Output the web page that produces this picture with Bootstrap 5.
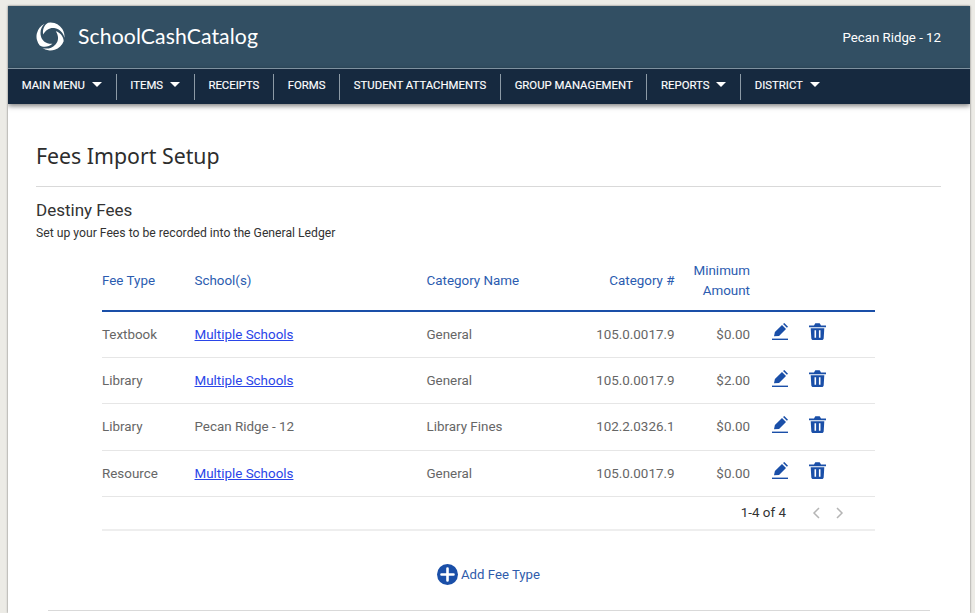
<!DOCTYPE html>
<html lang="en">
<head>
<meta charset="utf-8">
<title>Fees Import Setup</title>
<link href="https://cdn.jsdelivr.net/npm/bootstrap@5.3.0/dist/css/bootstrap.min.css" rel="stylesheet">
<style>
html,body{height:613px;overflow:hidden}
body{background:#ecebe6;font-family:Roboto,"Liberation Sans",sans-serif;color:#333;padding:6px 5px 0 8px}
.sheet{background:#fff;height:607px;overflow:hidden;box-shadow:0 0 2px rgba(0,0,0,.55)}
.brandbar{background:#324f63;height:62px;padding:0 29px 0 28px}
.brandname{font-family:Lato,"Noto Sans",sans-serif;font-size:21.2px;color:#fff;letter-spacing:.1px;margin-left:13px}
.sitename{font-size:13.25px;font-weight:400;color:#fff;padding-top:1px}
.menubar{background:#16293f;height:36px;border-top:1px solid #7e919f;box-shadow:0 2px 5px rgba(0,0,0,.5);flex-wrap:nowrap;position:relative}
.menubar .nav-link{color:#fff;font-size:11.35px;font-weight:400;padding:0 13.7px;height:26px;line-height:23px;white-space:nowrap;border-right:1px solid #8c9aa6;-webkit-text-stroke:.15px #fff}
.menubar .nav-item:last-child .nav-link{border-right:0}
.menubar .dropdown-toggle::after{margin-left:7px;vertical-align:2px;border-top-width:5px;border-left-width:5px;border-right-width:5px}
.pagebody{padding:0 29px 0 28px}
.pagetitle{font-family:"Noto Sans",sans-serif;font-size:21.3px;font-weight:400;color:#2d2d2d;margin:0;padding-top:37px;padding-bottom:15px;line-height:30px;border-bottom:1px solid #d9d9d9}
.subtitle{font-size:17px;font-weight:400;color:#333;margin:12px 0 0;line-height:22px}
.subnote{font-size:12.2px;color:#333;margin:4px 0 0;line-height:16px}
.feegrid{width:773px;margin:10px 0 0 66px;table-layout:fixed;font-size:13.4px}
.feegrid>:not(caption)>*>*{padding:0;vertical-align:middle;color:#666;border-bottom:1px solid #e6e6e6;box-shadow:none}
.feegrid thead th{color:#2b5cb0;font-weight:400;height:60px;line-height:20px;border-bottom:2px solid #1a4fa8}
.feegrid tbody td{height:46.4px;padding-top:1px}
.feegrid a{color:#2a45e8}
.toolcell svg{display:block}
.toolwrap{gap:21px;padding-left:22px;padding-bottom:6px}
.pagerrow td{height:33px!important;color:#333!important;border-bottom:2px solid #eee!important}
.pagerwrap{gap:26px;padding-right:31px}
.addrow{margin-top:33px;gap:3px;color:#2f5cab;font-size:13.2px}
.addrow span{padding-top:1px}
.footline{border-top:1px solid #d9d9d9;margin:25px 11px 0 12px}
</style>
</head>
<body>
<div class="sheet">
  <header class="brandbar d-flex align-items-center justify-content-between">
    <div class="d-flex align-items-center">
      <svg width="29" height="29" viewBox="0 0 29 29" fill="#fff" aria-hidden="true">
        <defs><path id="swoop" d="M12.070 .71A14 14 0 0 1 28.450 15.720C27.500 11 24 7.500 19.250 6.270 15 5 10 7 7.260 12.560 6 8 8.500 2.500 12.070 .71z"/></defs>
        <use href="#swoop"/>
        <use href="#swoop" transform="rotate(120 14.5 14.5)"/>
        <use href="#swoop" transform="rotate(240 14.5 14.5)"/>
      </svg>
      <span class="brandname">SchoolCashCatalog</span>
    </div>
    <span class="sitename">Pecan Ridge - 12</span>
  </header>
  <nav class="menubar nav align-items-center">
    <div class="nav-item"><a class="nav-link dropdown-toggle" href="#">MAIN MENU</a></div>
    <div class="nav-item"><a class="nav-link dropdown-toggle" href="#">ITEMS</a></div>
    <div class="nav-item"><a class="nav-link" href="#">RECEIPTS</a></div>
    <div class="nav-item"><a class="nav-link" href="#">FORMS</a></div>
    <div class="nav-item"><a class="nav-link" href="#">STUDENT ATTACHMENTS</a></div>
    <div class="nav-item"><a class="nav-link" href="#">GROUP MANAGEMENT</a></div>
    <div class="nav-item"><a class="nav-link dropdown-toggle" href="#">REPORTS</a></div>
    <div class="nav-item"><a class="nav-link dropdown-toggle" href="#">DISTRICT</a></div>
  </nav>
  <main class="pagebody">
    <h1 class="pagetitle">Fees Import Setup</h1>
    <h2 class="subtitle">Destiny Fees</h2>
    <p class="subnote">Set up your Fees to be recorded into the General Ledger</p>
    <svg width="0" height="0" class="position-absolute" aria-hidden="true">
      <defs>
        <g id="pen"><path d="M2 13.200l.9-4.200L10 1.900l4 4-7 7zM11 1L12.300 0l3.700 3.700-1.100 1.100z"/><rect y="15.600" width="16" height="1.400"/></g>
        <path id="bin" fill-rule="evenodd" d="M.4 2.400H5L6 .8c.2-.4.5-.5.9-.5h3.200c.4 0 .7.1.9.5l1 1.600h4.600c.3 0 .4.2.4.4v1.500H0V2.800c0-.2.1-.4.4-.4zM1.700 5.200h13.600l-.6 10c-.1 1-.8 1.800-1.900 1.800H4.200c-1.100 0-1.800-.8-1.900-1.800zM5.500 7.200v7.500h1.600V7.200zm4.400 0v7.500h1.600V7.200z"/>
      </defs>
    </svg>
    <table class="table feegrid mb-0">
      <colgroup><col style="width:92.5px"><col style="width:232px"><col style="width:130px"><col style="width:118px"><col style="width:75.5px"><col></colgroup>
      <thead><tr><th>Fee Type</th><th>School(s)</th><th>Category Name</th><th class="text-end">Category #</th><th class="text-end">Minimum<br>Amount</th><th></th></tr></thead>
      <tbody>
        <tr><td>Textbook</td><td><a href="#">Multiple Schools</a></td><td>General</td><td class="text-end">105.0.0017.9</td><td class="text-end">$0.00</td><td class="toolcell"><div class="d-flex toolwrap"><svg width="16" height="17" viewBox="0 0 16 17" fill="#1a4fa8"><use href="#pen"/></svg><svg width="17" height="17" viewBox="0 0 17 17" fill="#1a4fa8"><use href="#bin"/></svg></div></td></tr>
        <tr><td>Library</td><td><a href="#">Multiple Schools</a></td><td>General</td><td class="text-end">105.0.0017.9</td><td class="text-end">$2.00</td><td class="toolcell"><div class="d-flex toolwrap"><svg width="16" height="17" viewBox="0 0 16 17" fill="#1a4fa8"><use href="#pen"/></svg><svg width="17" height="17" viewBox="0 0 17 17" fill="#1a4fa8"><use href="#bin"/></svg></div></td></tr>
        <tr><td>Library</td><td>Pecan Ridge - 12</td><td>Library Fines</td><td class="text-end">102.2.0326.1</td><td class="text-end">$0.00</td><td class="toolcell"><div class="d-flex toolwrap"><svg width="16" height="17" viewBox="0 0 16 17" fill="#1a4fa8"><use href="#pen"/></svg><svg width="17" height="17" viewBox="0 0 17 17" fill="#1a4fa8"><use href="#bin"/></svg></div></td></tr>
        <tr><td>Resource</td><td><a href="#">Multiple Schools</a></td><td>General</td><td class="text-end">105.0.0017.9</td><td class="text-end">$0.00</td><td class="toolcell"><div class="d-flex toolwrap"><svg width="16" height="17" viewBox="0 0 16 17" fill="#1a4fa8"><use href="#pen"/></svg><svg width="17" height="17" viewBox="0 0 17 17" fill="#1a4fa8"><use href="#bin"/></svg></div></td></tr>
        <tr class="pagerrow"><td colspan="6"><div class="d-flex justify-content-end align-items-center pagerwrap"><span>1-4 of 4</span><div class="d-flex gap-3"><svg width="8" height="12" viewBox="0 0 8 12" fill="none" stroke="#b5b5b5" stroke-width="1.5"><path d="M7 1L2 6l5 5"/></svg><svg width="8" height="12" viewBox="0 0 8 12" fill="none" stroke="#b5b5b5" stroke-width="1.5"><path d="M1 1l5 5-5 5"/></svg></div></div></td></tr>
      </tbody>
    </table>
    <div class="addrow d-flex justify-content-center align-items-center">
      <svg width="21" height="21" viewBox="0 0 21 21"><circle cx="10.5" cy="10.5" r="10.5" fill="#1a4fa8"/><path d="M10.500 4.500v12M4.500 10.500h12" stroke="#fff" stroke-width="2.600" stroke-linecap="round"/></svg>
      <span>Add Fee Type</span>
    </div>
    <div class="footline"></div>
  </main>
</div>
</body>
</html>
